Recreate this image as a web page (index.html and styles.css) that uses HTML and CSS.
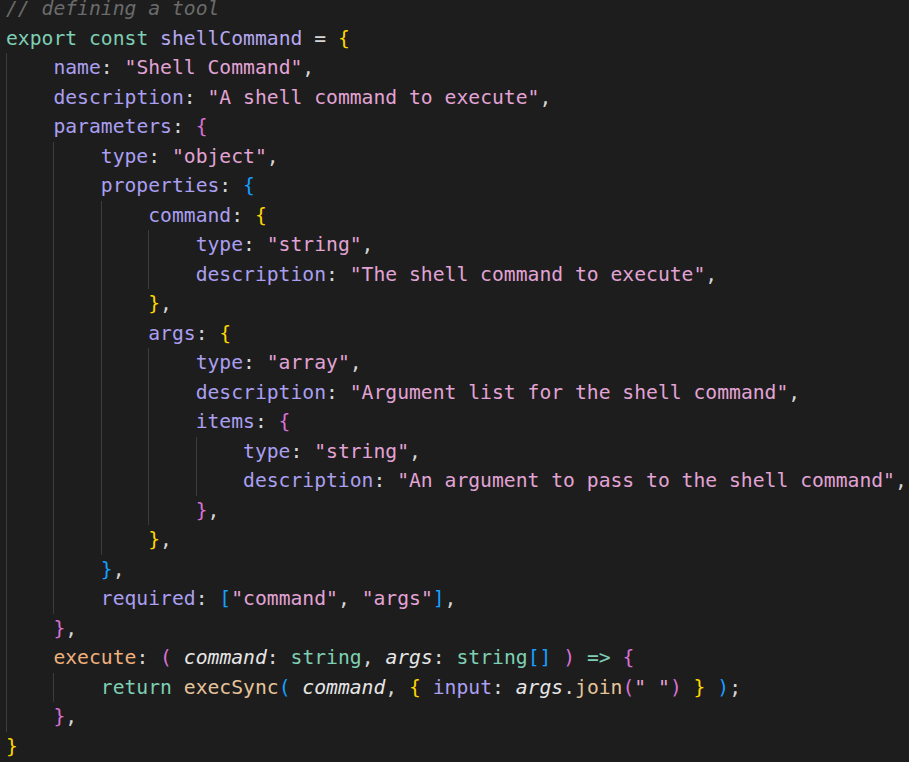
FILE: index.html
```html
<!DOCTYPE html>
<html>
<head>
<meta charset="utf-8">
<link rel="stylesheet" href="styles.css">
</head>
<body>
<div class="editor">
<div class="ln"><span class="c">// defining a tool</span></div>
<div class="ln"><span class="k">export</span> <span class="k">const</span> <span class="v">shellCommand</span> = <span class="y">{</span></div>
<div class="ln"><span class="g"></span><span class="p">name</span>: <span class="s">"Shell Command"</span>,</div>
<div class="ln"><span class="g"></span><span class="p">description</span>: <span class="s">"A shell command to execute"</span>,</div>
<div class="ln"><span class="g"></span><span class="p">parameters</span>: <span class="u">{</span></div>
<div class="ln"><span class="g"></span><span class="g"></span><span class="p">type</span>: <span class="s">"object"</span>,</div>
<div class="ln"><span class="g"></span><span class="g"></span><span class="p">properties</span>: <span class="b">{</span></div>
<div class="ln"><span class="g"></span><span class="g"></span><span class="g"></span><span class="p">command</span>: <span class="y">{</span></div>
<div class="ln"><span class="g"></span><span class="g"></span><span class="g"></span><span class="g"></span><span class="p">type</span>: <span class="s">"string"</span>,</div>
<div class="ln"><span class="g"></span><span class="g"></span><span class="g"></span><span class="g"></span><span class="p">description</span>: <span class="s">"The shell command to execute"</span>,</div>
<div class="ln"><span class="g"></span><span class="g"></span><span class="g"></span><span class="y">}</span>,</div>
<div class="ln"><span class="g"></span><span class="g"></span><span class="g"></span><span class="p">args</span>: <span class="y">{</span></div>
<div class="ln"><span class="g"></span><span class="g"></span><span class="g"></span><span class="g"></span><span class="p">type</span>: <span class="s">"array"</span>,</div>
<div class="ln"><span class="g"></span><span class="g"></span><span class="g"></span><span class="g"></span><span class="p">description</span>: <span class="s">"Argument list for the shell command"</span>,</div>
<div class="ln"><span class="g"></span><span class="g"></span><span class="g"></span><span class="g"></span><span class="p">items</span>: <span class="u">{</span></div>
<div class="ln"><span class="g"></span><span class="g"></span><span class="g"></span><span class="g"></span><span class="g"></span><span class="p">type</span>: <span class="s">"string"</span>,</div>
<div class="ln"><span class="g"></span><span class="g"></span><span class="g"></span><span class="g"></span><span class="g"></span><span class="p">description</span>: <span class="s">"An argument to pass to the shell command"</span>,</div>
<div class="ln"><span class="g"></span><span class="g"></span><span class="g"></span><span class="g"></span><span class="u">}</span>,</div>
<div class="ln"><span class="g"></span><span class="g"></span><span class="g"></span><span class="y">}</span>,</div>
<div class="ln"><span class="g"></span><span class="g"></span><span class="b">}</span>,</div>
<div class="ln"><span class="g"></span><span class="g"></span><span class="p">required</span>: <span class="b">[</span><span class="s">"command"</span>, <span class="s">"args"</span><span class="b">]</span>,</div>
<div class="ln"><span class="g"></span><span class="u">}</span>,</div>
<div class="ln"><span class="g"></span><span class="m">execute</span>: <span class="u">(</span> <span class="a">command</span>: <span class="k">string</span>, <span class="a">args</span>: <span class="k">string</span><span class="b">[]</span> <span class="u">)</span> <span class="k">=&gt;</span> <span class="u">{</span></div>
<div class="ln"><span class="g"></span><span class="g"></span><span class="k">return</span> <span class="f">execSync</span><span class="b">(</span> <span class="a">command</span>, <span class="y">{</span> <span class="p">input</span>: <span class="a">args</span>.<span class="f">join</span><span class="u">(</span><span class="s">" "</span><span class="u">)</span> <span class="y">}</span> <span class="b">)</span>;</div>
<div class="ln"><span class="g"></span><span class="u">}</span>,</div>
<div class="ln"><span class="y">}</span></div>
</div>
</body>
</html>
```

FILE: styles.css
```css
html, body {
  margin: 0;
  padding: 0;
  background: #1d1d1d;
  overflow: hidden;
}

.editor {
  margin-top: -6px;
  padding-left: 6px;
  font-family: "DejaVu Sans Mono", "Liberation Mono", monospace;
  font-size: 19.7px;
  color: #d6d6d6;
}

.ln {
  height: 29.52px;
  line-height: 29.52px;
  white-space: pre;
}

.g {
  display: inline-block;
  box-sizing: border-box;
  width: 4ch;
  height: 29.52px;
  vertical-align: top;
  border-left: 1px solid #3c3c3c;
}

.c { color: #6b6b6b; font-style: italic; }
.k { color: #7ecfb3; }
.v { color: #b5a8f0; }
.p { color: #aa9ff0; }
.s { color: #e2a3d5; }
.m { color: #efb07c; }
.f { color: #e6c49a; }
.a { color: #e6e6e6; font-style: italic; }
.y { color: #ffd700; }
.u { color: #da70d6; }
.b { color: #179fff; }
```
